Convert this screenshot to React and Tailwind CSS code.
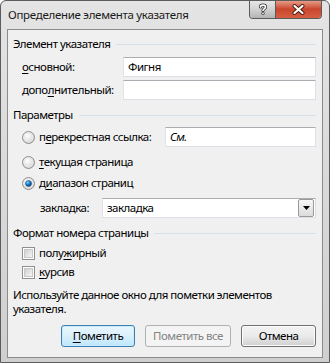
import React from 'react'

const font = { fontFamily: '"Noto Sans", "Liberation Sans", sans-serif' }

function U({ children }) {
  return <span className="underline underline-offset-2">{children}</span>
}

function GroupHeader({ children }) {
  return (
    <div className="flex h-[16px] items-center gap-[6px] pl-[5px] pr-[6px]">
      <span className="whitespace-nowrap">{children}</span>
      <div className="h-px flex-1 bg-[#d5dfe5]" />
    </div>
  )
}

function TextBox({ value, className = '', italic = false }) {
  return (
    <div
      className={`flex h-[20px] items-center border border-[#abadb3] border-b-[#dbdfe6] border-l-[#e2e3ea] border-r-[#dbdfe6] bg-white px-[4px] ${italic ? 'italic' : ''} ${className}`}
    >
      {value}
    </div>
  )
}

function Radio({ checked }) {
  return (
    <svg width="13" height="13" viewBox="0 0 13 13" className="shrink-0">
      <defs>
        <radialGradient id="rbg" cx="0.4" cy="0.35" r="0.7">
          <stop offset="0" stopColor="#ffffff" />
          <stop offset="1" stopColor="#cfcfcf" />
        </radialGradient>
        <radialGradient id="rdot" cx="0.35" cy="0.3" r="0.7">
          <stop offset="0" stopColor="#8ad8ff" />
          <stop offset="0.5" stopColor="#1a88d0" />
          <stop offset="1" stopColor="#0b3f7a" />
        </radialGradient>
      </defs>
      <circle cx="6.5" cy="6.5" r="6" fill="url(#rbg)" stroke="#8e8f8f" strokeWidth="1" />
      <circle cx="6.5" cy="6.5" r="4.3" fill="none" stroke="#e8e8e8" strokeWidth="0.8" />
      {checked && <circle cx="6.5" cy="6.5" r="3" fill="url(#rdot)" stroke="#1d4e7d" strokeWidth="0.6" />}
    </svg>
  )
}

function Check() {
  return (
    <div className="flex h-[13px] w-[13px] shrink-0 items-center justify-center border border-[#8e8f8f] bg-white">
      <div className="h-[9px] w-[9px] border border-[#c8c8c8] bg-gradient-to-br from-[#d0d0d0] to-[#f6f6f6]" />
    </div>
  )
}

function Button({ children, variant }) {
  if (variant === 'default') {
    return (
      <div className="flex h-[22px] items-center justify-center rounded-[3px] border border-[#3c7fb1] bg-gradient-to-b from-[#eaf6fd] via-[#d9f0fc] to-[#bee6fd] shadow-[inset_0_0_0_1px_#c7ecfb]">
        {children}
      </div>
    )
  }
  if (variant === 'disabled') {
    return (
      <div className="flex h-[22px] items-center justify-center rounded-[3px] border border-[#adb2b5] bg-[#f4f4f4] text-[#838383]">
        {children}
      </div>
    )
  }
  return (
    <div className="flex h-[22px] items-center justify-center rounded-[3px] border border-[#707070] bg-gradient-to-b from-[#f2f2f2] via-[#ebebeb] to-[#cfcfcf] shadow-[inset_0_0_0_1px_#fcfcfc]">
      {children}
    </div>
  )
}

export default function App() {
  return (
    <div
      className="flex h-[363px] w-[330px] flex-col overflow-hidden whitespace-nowrap rounded-t-[6px] border border-[#5c5c5c] bg-gradient-to-b from-[#e4e4e4] to-[#cfcfcf] text-[11.5px] tracking-[-0.5px] text-black"
      style={font}
    >
      {/* Title bar */}
      <div className="flex h-[28px] items-start">
        <div className="flex h-[28px] flex-1 items-center pl-[7px] tracking-[-0.3px] text-[#1a1a1a]">
          Определение элемента указателя
        </div>
        <div className="-mt-px mr-[7px] flex h-[19px] overflow-hidden rounded-b-[4px] border border-t-0 border-[#5a5a5a]">
          <div className="flex w-[26px] items-center justify-center border-r border-[#5a5a5a] bg-gradient-to-b from-[#e9e9e9] via-[#d2d2d2] to-[#b4b4b4]">
            <svg width="10" height="12" viewBox="0 0 10 12">
              <path d="M2.5 4 C2.5 1.5 7.5 1.5 7.5 4 C7.5 5.8 5 5.8 5 7.5" fill="none" stroke="#3a3a3a" strokeWidth="3.2" strokeLinecap="round" />
              <path d="M2.5 4 C2.5 1.5 7.5 1.5 7.5 4 C7.5 5.8 5 5.8 5 7.5" fill="none" stroke="#ffffff" strokeWidth="1.6" strokeLinecap="round" />
              <circle cx="5" cy="10.3" r="1.6" fill="#3a3a3a" />
              <circle cx="5" cy="10.3" r="0.9" fill="#ffffff" />
            </svg>
          </div>
          <div className="flex w-[45px] items-center justify-center bg-gradient-to-b from-[#e8a592] via-[#c9462c] to-[#d55d42]">
            <svg width="13" height="11" viewBox="0 0 13 11">
              <path d="M2.5 2 L10.5 9 M10.5 2 L2.5 9" stroke="#4a1a10" strokeWidth="4" strokeLinecap="round" />
              <path d="M2.5 2 L10.5 9 M10.5 2 L2.5 9" stroke="#ffffff" strokeWidth="2.2" strokeLinecap="round" />
            </svg>
          </div>
        </div>
      </div>

      {/* Client panel */}
      <div className="mx-[6px] flex h-[329px] flex-col border border-[#8b8b8b] bg-[#f0f0f0]">
        <div className="mt-[6px]">
          <GroupHeader>Элемент указателя</GroupHeader>
        </div>

        <div className="mt-[5px] flex h-[20px] items-center pl-[14px] pr-[6px]">
          <span className="w-[101px] shrink-0">
            <U>о</U>сновной:
          </span>
          <TextBox value="Фигня" className="flex-1" />
        </div>
        <div className="mt-[3px] flex h-[20px] items-center pl-[14px] pr-[6px]">
          <span className="w-[101px] shrink-0">
            допо<U>л</U>нительный:
          </span>
          <TextBox value="" className="flex-1" />
        </div>

        <div className="mt-[7px]">
          <GroupHeader>Параметры</GroupHeader>
        </div>

        <div className="mt-[4px] flex h-[20px] items-center pl-[14px] pr-[6px]">
          <div className="flex w-[143px] shrink-0 items-center gap-[4px]">
            <Radio />
            <span>
              п<U>е</U>рекрестная ссылка:
            </span>
          </div>
          <TextBox value="См." italic className="flex-1" />
        </div>
        <div className="mt-[7px] flex h-[16px] items-center gap-[4px] pl-[14px]">
          <Radio />
          <span>
            <U>т</U>екущая страница
          </span>
        </div>
        <div className="mt-[5px] flex h-[16px] items-center gap-[4px] pl-[14px]">
          <Radio checked />
          <span>
            д<U>и</U>апазон страниц
          </span>
        </div>
        <div className="mt-[7px] flex h-[20px] items-center pl-[32px] pr-[6px]">
          <span className="w-[62px] shrink-0">закладка:</span>
          <div className="flex h-[20px] flex-1 items-center border border-[#abadb3] border-b-[#dbdfe6] border-l-[#e2e3ea] border-r-[#dbdfe6] bg-white pl-[4px] pr-px">
            <span className="flex-1">закладка</span>
            <div className="flex h-[18px] w-[16px] items-center justify-center rounded-[2px] border border-[#9a9a9a] bg-gradient-to-b from-[#f6f6f6] to-[#dcdcdc]">
              <svg width="7" height="4" viewBox="0 0 7 4">
                <path d="M0 0 H7 L3.5 4 Z" fill="#000" />
              </svg>
            </div>
          </div>
        </div>

        <div className="mt-[7px]">
          <GroupHeader>Формат номера страницы</GroupHeader>
        </div>

        <div className="mt-[4px] flex h-[16px] items-center gap-[4px] pl-[14px]">
          <Check />
          <span>
            полу<U>ж</U>ирный
          </span>
        </div>
        <div className="mt-[3px] flex h-[16px] items-center gap-[4px] pl-[14px]">
          <Check />
          <span>
            <U>к</U>урсив
          </span>
        </div>

        <p className="mt-[8px] pl-[5px] pr-[6px] leading-[14px]">
          Используйте данное окно для пометки элементов
          <br />
          указателя.
        </p>

        <div className="mt-[9px] flex justify-end gap-[10px] pr-[6px]">
          <div className="w-[74px]">
            <Button variant="default">
              <span>
                <U>П</U>ометить
              </span>
            </Button>
          </div>
          <div className="w-[86px]">
            <Button variant="disabled">Пометить все</Button>
          </div>
          <div className="w-[75px]">
            <Button>Отмена</Button>
          </div>
        </div>
      </div>
    </div>
  )
}
